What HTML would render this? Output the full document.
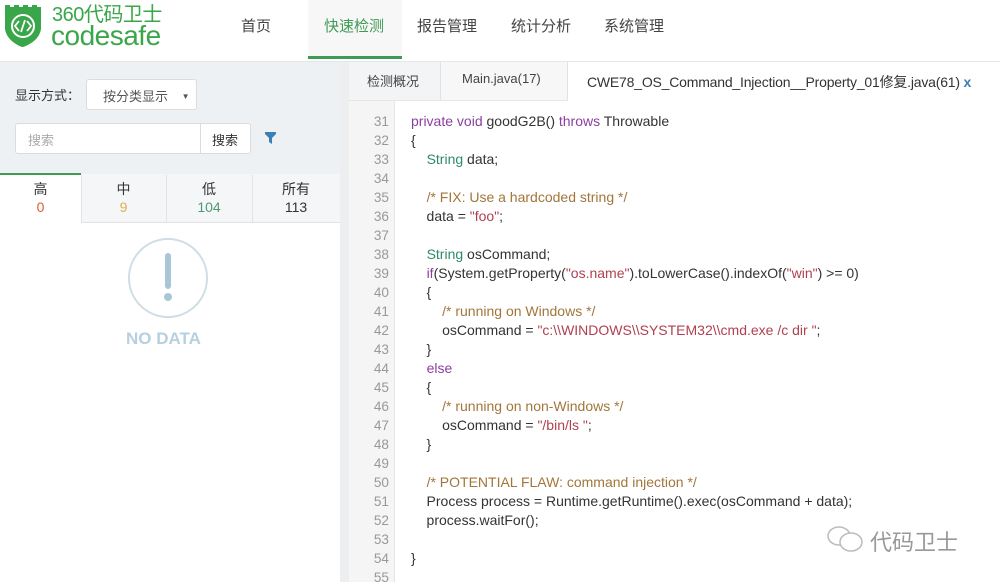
<!DOCTYPE html>
<html><head><meta charset="utf-8"><style>
*{margin:0;padding:0;box-sizing:border-box}
body{width:1000px;height:582px;overflow:hidden;background:#fff;font-family:"Liberation Sans","Noto Sans CJK SC",sans-serif;position:relative;color:#333}
.abs{position:absolute}
.nav{font-size:15px;color:#444;top:15px}
.left{left:0;top:62px;width:340px;height:112px;background:#edf1f4}
.code{font-size:14px;color:#333;line-height:19px;white-space:pre}
.ln{color:#999;text-align:right;width:40px;left:349px;font-size:13.6px}
.kw{color:#8b3f9f}.ty{color:#2e8b6a}.cm{color:#a2763a}.st{color:#b04050}
</style></head><body>
<div class="abs" style="left:0;top:0;width:1000px;height:62px;background:#fff;border-bottom:1px solid #e6e6e6"></div>
<svg class="abs" style="left:3px;top:3px" width="40" height="46" viewBox="0 0 40 46">
<path d="M2 2h5v3h4V2h5v3h4V2h5v3h4V2h5v3h4V2h0v22c0 10-9 17-19 20C11 41 2 34 2 24z" fill="#3aa64a"/>
<path d="M2 4h36v20c0 10-9 17-18 20C11 41 2 34 2 24z" fill="#3aa64a"/>
<circle cx="20" cy="23" r="11" fill="none" stroke="#fff" stroke-width="2"/>
<path d="M16 18l-4 5 4 5M24 18l4 5-4 5M22 17l-4 12" stroke="#fff" stroke-width="1.8" fill="none"/>
</svg>
<div class="abs" style="left:52px;top:4px;font-size:20px;color:#3aa64a;line-height:22px;letter-spacing:-0.5px">360代码卫士</div>
<div class="abs" style="left:51px;top:22px;font-size:28px;color:#3aa64a;line-height:28px;letter-spacing:-0.5px">codesafe</div>
<div class="abs nav" style="left:241px">首页</div>
<div class="abs" style="left:308px;top:0;width:94px;height:59px;background:#f7f7f7;border-bottom:3px solid #3f9a55"></div>
<div class="abs nav" style="left:324px;color:#3f9a55">快速检测</div>
<div class="abs nav" style="left:417px">报告管理</div>
<div class="abs nav" style="left:511px">统计分析</div>
<div class="abs nav" style="left:604px">系统管理</div>
<div class="abs left"></div>
<div class="abs" style="left:15px;top:85px;font-size:13px;color:#333">显示方式：</div>
<div class="abs" style="left:86px;top:79px;width:111px;height:31px;background:#fff;border:1px solid #dcdcdc;border-radius:3px;font-size:13px;padding:6px 0 0 16px;color:#555">按分类显示 <span style="font-size:8px;margin-left:10px;vertical-align:2px">▼</span></div>
<div class="abs" style="left:15px;top:123px;width:186px;height:31px;background:#fff;border:1px solid #dcdcdc;border-radius:3px 0 0 3px;font-size:13px;padding:6px 12px;color:#aaa">搜索</div>
<div class="abs" style="left:200px;top:123px;width:51px;height:31px;background:#fff;border:1px solid #dcdcdc;border-radius:0 3px 3px 0;font-size:13px;padding:6px 11px;color:#333">搜索</div>
<svg class="abs" style="left:265px;top:132px" width="11" height="12" viewBox="0 0 11 12"><path d="M0 0h11v2L7 6v6L4 10V6L0 2z" fill="#3a7fb5"/></svg>
<div class="abs" style="left:0;top:174px;width:340px;height:49px;background:#fff"></div>
<div class="abs" style="left:81px;top:174px;width:259px;height:49px;background:#f4f6f8;border-bottom:1px solid #e3e3e3"></div>
<div class="abs" style="left:0;top:173px;width:81px;height:2px;background:#3f9a55"></div>
<div class="abs" style="left:166px;top:175px;width:1px;height:47px;background:#e3e3e3"></div>
<div class="abs" style="left:252px;top:175px;width:1px;height:47px;background:#e3e3e3"></div>
<div class="abs" style="left:81px;top:175px;width:1px;height:47px;background:#e3e3e3"></div>
<div class="abs" style="top:180px;left:0;width:81px;text-align:center;font-size:14px;line-height:18px">高<br><span style="color:#d9602f">0</span></div>
<div class="abs" style="top:180px;left:81px;width:85px;text-align:center;font-size:14px;line-height:18px">中<br><span style="color:#e0b050">9</span></div>
<div class="abs" style="top:180px;left:166px;width:86px;text-align:center;font-size:14px;line-height:18px">低<br><span style="color:#4e9a72">104</span></div>
<div class="abs" style="top:180px;left:252px;width:88px;text-align:center;font-size:14px;line-height:18px">所有<br>113</div>
<div class="abs" style="left:128px;top:238px;width:80px;height:80px;border:2px solid #cfdde6;border-radius:50%"></div>
<div class="abs" style="left:165px;top:253px;width:6px;height:36px;background:#a9c6d8;border-radius:3px"></div>
<div class="abs" style="left:164px;top:293px;width:8px;height:8px;background:#a9c6d8;border-radius:50%"></div>
<div class="abs" style="left:126px;top:329px;font-size:17px;font-weight:bold;color:#b7d0df">NO DATA</div>
<div class="abs" style="left:340px;top:62px;width:9px;height:520px;background:#eceeef"></div>
<div class="abs" style="left:349px;top:62px;width:651px;height:39px;background:#f3f4f5;border-bottom:1px solid #e6e6e6"></div>
<div class="abs" style="left:349px;top:62px;width:92px;height:38px;border-right:1px solid #e2e2e2"></div>
<div class="abs" style="left:441px;top:62px;width:127px;height:38px;background:#f7f7f7;border-right:1px solid #e2e2e2"></div>
<div class="abs" style="left:568px;top:62px;width:432px;height:39px;background:#fff"></div>
<div class="abs" style="left:367px;top:71px;font-size:13px;color:#444">检测概况</div>
<div class="abs" style="left:462px;top:71px;font-size:13px;color:#444">Main.java(17)</div>
<div class="abs" style="left:587px;top:72px;font-size:14px;color:#333;letter-spacing:-0.2px">CWE78_OS_Command_Injection__Property_01修复.java(61) <span style="color:#3a7fb5;font-weight:bold">x</span></div>
<div class="abs" style="left:349px;top:101px;width:46px;height:481px;background:#f5f5f5;border-right:1px solid #e6e6e6"></div>
<div class="abs code ln" style="top:112px">31
32
33
34
35
36
37
38
39
40
41
42
43
44
45
46
47
48
49
50
51
52
53
54
55</div>
<div class="abs code" style="left:411px;top:112px"><span class="kw">private</span> <span class="kw">void</span> goodG2B() <span class="kw">throws</span> Throwable
{
    <span class="ty">String</span> data;

    <span class="cm">/* FIX: Use a hardcoded string */</span>
    data = <span class="st">"foo"</span>;

    <span class="ty">String</span> osCommand;
    <span class="kw">if</span>(System.getProperty(<span class="st">"os.name"</span>).toLowerCase().indexOf(<span class="st">"win"</span>) &gt;= 0)
    {
        <span class="cm">/* running on Windows */</span>
        osCommand = <span class="st">"c:\\WINDOWS\\SYSTEM32\\cmd.exe /c dir "</span>;
    }
    <span class="kw">else</span>
    {
        <span class="cm">/* running on non-Windows */</span>
        osCommand = <span class="st">"/bin/ls "</span>;
    }

    <span class="cm">/* POTENTIAL FLAW: command injection */</span>
    Process process = Runtime.getRuntime().exec(osCommand + data);
    process.waitFor();

}
</div>
<svg class="abs" style="left:826px;top:525px" width="40" height="28" viewBox="0 0 40 28"><ellipse cx="13" cy="11" rx="11" ry="9" fill="none" stroke="#bbb" stroke-width="1.5"/><ellipse cx="25" cy="17" rx="11" ry="9" fill="#fff" stroke="#bbb" stroke-width="1.5"/></svg>
<div class="abs" style="left:870px;top:525px;font-size:22px;color:#999">代码卫士</div>
</body></html>
